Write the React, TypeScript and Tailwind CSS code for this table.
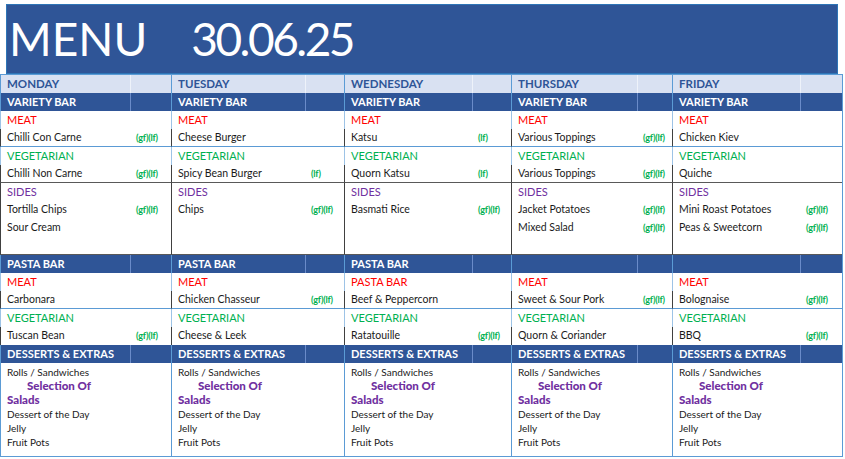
import * as React from "react";

type Item = { name: string; tag?: string };

type Day = {
    day: string;
    main: number;
    side: number;
    meat: Item;
    veg: Item;
    sides: Item[];
    pastaTitle: string;
    pastaLabel: string;
    pastaMeat: Item;
    pastaVeg: Item;
};

const GL = "(gf)(lf)";

const days: Day[] = [
    {
        day: "MONDAY",
        main: 130,
        side: 41,
        meat: { name: "Chilli Con Carne", tag: GL },
        veg: { name: "Chilli Non Carne", tag: GL },
        sides: [{ name: "Tortilla Chips", tag: GL }, { name: "Sour Cream" }],
        pastaTitle: "PASTA BAR",
        pastaLabel: "MEAT",
        pastaMeat: { name: "Carbonara" },
        pastaVeg: { name: "Tuscan Bean", tag: GL },
    },
    {
        day: "TUESDAY",
        main: 134,
        side: 39,
        meat: { name: "Cheese Burger" },
        veg: { name: "Spicy Bean Burger", tag: "(lf)" },
        sides: [{ name: "Chips", tag: GL }],
        pastaTitle: "PASTA BAR",
        pastaLabel: "MEAT",
        pastaMeat: { name: "Chicken Chasseur", tag: GL },
        pastaVeg: { name: "Cheese & Leek" },
    },
    {
        day: "WEDNESDAY",
        main: 128,
        side: 39,
        meat: { name: "Katsu", tag: "(lf)" },
        veg: { name: "Quorn Katsu", tag: "(lf)" },
        sides: [{ name: "Basmati Rice", tag: GL }],
        pastaTitle: "PASTA BAR",
        pastaLabel: "PASTA BAR",
        pastaMeat: { name: "Beef & Peppercorn" },
        pastaVeg: { name: "Ratatouille", tag: GL },
    },
    {
        day: "THURSDAY",
        main: 126,
        side: 35,
        meat: { name: "Various Toppings", tag: GL },
        veg: { name: "Various Toppings", tag: GL },
        sides: [
            { name: "Jacket Potatoes", tag: GL },
            { name: "Mixed Salad", tag: GL },
        ],
        pastaTitle: "",
        pastaLabel: "MEAT",
        pastaMeat: { name: "Sweet & Sour Pork", tag: GL },
        pastaVeg: { name: "Quorn & Coriander" },
    },
    {
        day: "FRIDAY",
        main: 128,
        side: 43,
        meat: { name: "Chicken Kiev" },
        veg: { name: "Quiche" },
        sides: [
            { name: "Mini Roast Potatoes", tag: GL },
            { name: "Peas & Sweetcorn", tag: GL },
        ],
        pastaTitle: "",
        pastaLabel: "MEAT",
        pastaMeat: { name: "Bolognaise", tag: GL },
        pastaVeg: { name: "BBQ", tag: GL },
    },
];

const font = { fontFamily: "Lato, 'Open Sans', sans-serif" };

// one spreadsheet row, split into a name cell and a small tag cell
const Row: React.FC<{
    d: Day;
    h: string;
    edge: string;
    children?: React.ReactNode;
    tag?: string;
    cls?: string;
    split?: string;
}> = ({ d, h, edge, children, tag, cls = "", split = "" }) => (
    <div className={`flex border-l ${h} ${edge} ${cls}`}>
        <div
            className={`flex items-center truncate pl-[6px] ${split ? `border-r ${split}` : ""}`}
            style={{ width: d.main }}
        >
            {children}
        </div>
        <div className="flex flex-1 items-center pl-[5px]">
            {tag && (
                <span className="text-[9px] font-bold tracking-[-0.2px] text-[#00b050]">
                    {tag}
                </span>
            )}
        </div>
    </div>
);

const Bar: React.FC<{ d: Day; label: string; h?: string }> = ({
    d,
    label,
    h = "h-[18px]",
}) => (
    <Row
        d={d}
        h={h}
        edge="border-[#5b9bd5]"
        cls="bg-[#2f5597] text-[11px] font-bold text-white"
        split="border-[#6a8bc9]"
    >
        {label}
    </Row>
);

const Label: React.FC<{ d: Day; text: string; color: string; edge?: string }> = ({
    d,
    text,
    color,
    edge = "border-[#9dc3e6]",
}) => (
    <Row d={d} h="h-[18px]" edge={edge} cls={`pt-[1px] text-[11px] ${color}`}>
        {text}
    </Row>
);

const Dish: React.FC<{ d: Day; item?: Item; cls?: string; edge?: string }> = ({
    d,
    item,
    cls = "",
    edge = "border-[#404040]",
}) => (
    <Row d={d} h="h-[18px]" edge={edge} tag={item?.tag} cls={`text-[10.5px] text-[#1a1a1a] ${cls}`}>
        {item?.name}
    </Row>
);

const DayColumn: React.FC<{ d: Day; last: boolean }> = ({ d, last }) => {
    const sides = [...d.sides];
    while (sides.length < 3) sides.push({ name: "" });
    return (
        <div
            className={`flex flex-col ${last ? "border-r border-[#5b9bd5]" : ""}`}
            style={{ width: d.main + d.side }}
        >
            <Row
                d={d}
                h="h-[19px]"
                edge="border-[#5b9bd5]"
                cls="border-t border-[#5b9bd5] bg-[#d9e1f2] text-[11.5px] font-bold text-[#2f5597]"
                split="border-[#eef2fa]"
            >
                {d.day}
            </Row>
            <Bar d={d} label="VARIETY BAR" />
            <Label d={d} text="MEAT" color="text-[#ff0000]" />
            <Dish d={d} item={d.meat} cls="border-b border-b-[#5b9bd5]" />
            <Label d={d} text="VEGETARIAN" color="text-[#00b050]" />
            <Dish d={d} item={d.veg} cls="border-b border-b-[#595959]" />
            <Label d={d} text="SIDES" color="text-[#7030a0]" edge="border-[#404040]" />
            {sides.map((s, i) => (
                <Dish
                    key={i}
                    d={d}
                    item={s}
                    cls={i === 2 ? "border-b border-b-[#595959]" : ""}
                />
            ))}
            <Bar d={d} label={d.pastaTitle} />
            <Label d={d} text={d.pastaLabel} color="text-[#ff0000]" />
            <Dish d={d} item={d.pastaMeat} cls="border-b border-b-[#5b9bd5]" />
            <Label d={d} text="VEGETARIAN" color="text-[#00b050]" />
            <Dish d={d} item={d.pastaVeg} />
            <Bar d={d} label="DESSERTS & EXTRAS" />
            <div className="flex h-[94px] flex-col border-b border-l border-[#5b9bd5] pt-[2px] pl-[6px] text-[10px] leading-[14px] text-[#1a1a1a]">
                <span>Rolls / Sandwiches</span>
                <span className="pl-[20px] text-[11.5px] font-black text-[#7030a0]">
                    Selection Of
                </span>
                <span className="text-[11.5px] font-black text-[#7030a0]">Salads</span>
                <span>Dessert of the Day</span>
                <span>Jelly</span>
                <span>Fruit Pots</span>
            </div>
        </div>
    );
};

const App: React.FC = () => {
    return (
        <div className="h-[459px] w-[845px] overflow-hidden bg-white" style={font}>
            <div className="ml-[6px] mt-[4px] flex h-[70px] w-[832px] items-center border border-[#2e75b6] bg-[#2f5597] pl-[2px] text-[46px] leading-none text-white">
                <span>MENU</span>
                <span className="ml-[44px] tracking-[-2.5px]">30.06.25</span>
            </div>
            <div className="flex">
                {days.map((d, i) => (
                    <DayColumn key={d.day} d={d} last={i === days.length - 1} />
                ))}
            </div>
        </div>
    );
};

export default App;
